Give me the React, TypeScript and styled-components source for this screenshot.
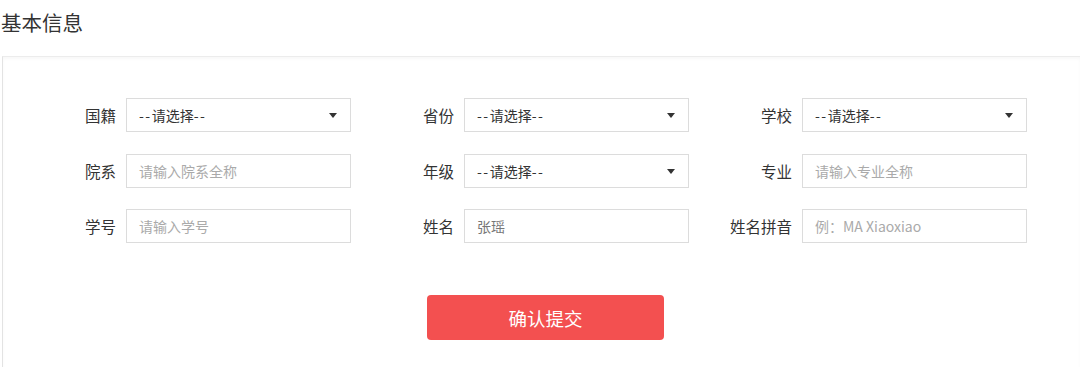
import styled, { createGlobalStyle } from "styled-components";

const GlobalStyle = createGlobalStyle`
  html, body {
    margin: 0;
    padding: 0;
    background: #fff;
  }
  body {
    font-family: "Noto Sans CJK SC", "Noto Sans", "Liberation Sans", sans-serif;
    color: #333;
  }
`;

const Page = styled.div`
  width: 1080px;
  height: 367px;
  overflow: hidden;
`;

const Title = styled.h2`
  margin: 0;
  height: 56px;
  padding-left: 1px;
  font-size: 20.5px;
  font-weight: 400;
  line-height: 44px;
  color: #333;
`;

const Panel = styled.section`
  margin-left: 2px;
  height: 320px;
  border-top: 1px solid #ececec;
  border-left: 1px solid #e3e3e3;
  box-shadow: inset 0 2px 3px rgb(0 0 0 / 3%);
  padding: 41px 0 0 33px;
`;

const FormGrid = styled.div`
  display: grid;
  grid-template-columns: repeat(3, 315px);
  column-gap: 23px;
  row-gap: 21.5px;
`;

const Field = styled.label`
  display: flex;
  align-items: center;
  gap: 10px;
`;

const Label = styled.span`
  width: 80px;
  text-align: right;
  font-size: 15.5px;
  color: #333;
  white-space: nowrap;
`;

const Box = styled.div`
  position: relative;
  box-sizing: border-box;
  width: 225px;
  height: 34px;
  border: 1px solid #dcdcdc;
  background: #fff;
  display: flex;
  align-items: center;
  padding: 0 12px;
  font-size: 14px;
`;

const Value = styled.span<{ $muted?: boolean }>`
  color: ${({ $muted }) => ($muted ? "#777" : "#333")};
`;

const Dashes = styled.span`
  letter-spacing: 1.5px;
`;

const Placeholder = styled.span`
  color: #aaa;
`;

const Caret = styled.span`
  position: absolute;
  right: 13px;
  top: 50%;
  margin-top: -2px;
  width: 0;
  height: 0;
  border-left: 4px solid transparent;
  border-right: 4px solid transparent;
  border-top: 5px solid #333;
`;

const Footer = styled.div`
  box-sizing: border-box;
  width: 991px;
  display: flex;
  justify-content: center;
  padding-left: 28px;
  margin-top: 52px;
`;

const SubmitButton = styled.button`
  width: 237px;
  height: 45px;
  border: none;
  border-radius: 4px;
  background: #f35050;
  color: #fff;
  font-family: inherit;
  font-size: 18.5px;
  cursor: pointer;
`;

type FieldDef =
  | { label: string; kind: "select" }
  | { label: string; kind: "input"; placeholder?: string; value?: string };

const fields: FieldDef[] = [
  { label: "国籍", kind: "select" },
  { label: "省份", kind: "select" },
  { label: "学校", kind: "select" },
  { label: "院系", kind: "input", placeholder: "请输入院系全称" },
  { label: "年级", kind: "select" },
  { label: "专业", kind: "input", placeholder: "请输入专业全称" },
  { label: "学号", kind: "input", placeholder: "请输入学号" },
  { label: "姓名", kind: "input", value: "张瑶" },
  { label: "姓名拼音", kind: "input", placeholder: "例：MA Xiaoxiao" },
];

const App = () => (
  <Page>
    <GlobalStyle />
    <Title>基本信息</Title>
    <Panel>
      <FormGrid>
        {fields.map((f) => (
          <Field key={f.label}>
            <Label>{f.label}</Label>
            <Box>
              {f.kind === "select" ? (
                <>
                  <Value>
                    <Dashes>--</Dashes>请选择<Dashes>--</Dashes>
                  </Value>
                  <Caret />
                </>
              ) : f.value ? (
                <Value $muted>{f.value}</Value>
              ) : (
                <Placeholder>{f.placeholder}</Placeholder>
              )}
            </Box>
          </Field>
        ))}
      </FormGrid>
      <Footer>
        <SubmitButton type="button">确认提交</SubmitButton>
      </Footer>
    </Panel>
  </Page>
);

export default App;
